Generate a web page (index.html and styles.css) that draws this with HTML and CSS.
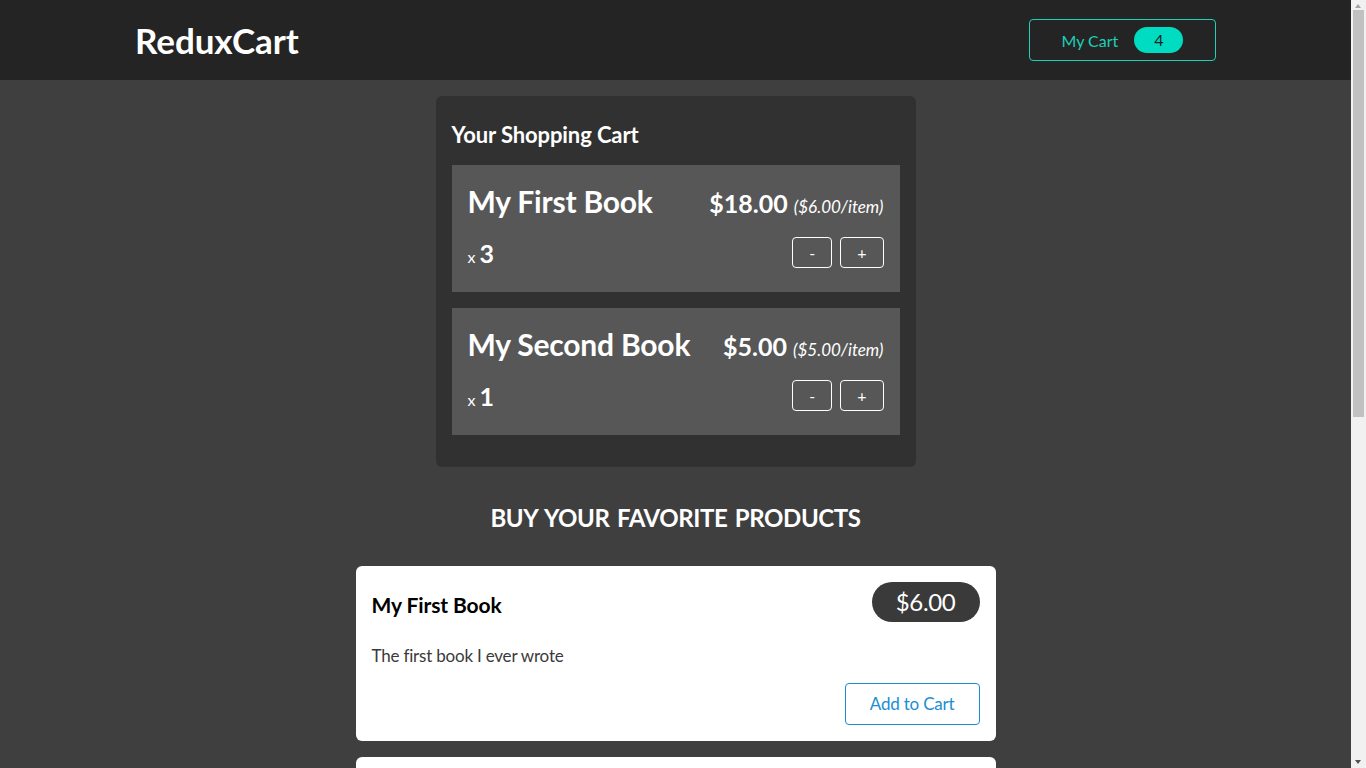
FILE: index.html
```html
<!DOCTYPE html>
<html lang="en">
<head>
<meta charset="utf-8">
<title>ReduxCart</title>
<link rel="stylesheet" href="styles.css">
</head>
<body>
<header class="header">
  <h1 class="logo">ReduxCart</h1>
  <nav>
    <button class="cart-button"><span>My Cart</span><span class="badge">4</span></button>
  </nav>
</header>
<main class="main">
  <section class="card cart">
    <h2 class="cart-title">Your Shopping Cart</h2>
    <ul class="cart-list">
      <li class="cart-item">
        <div class="cart-item-head">
          <h3 class="cart-item-title">My First Book</h3>
          <div class="cart-price">$18.00 <span class="item-price">($6.00/item)</span></div>
        </div>
        <div class="details">
          <div class="quantity">x <span class="qty-num">3</span></div>
          <div class="qty-actions">
            <button class="qty-btn">-</button>
            <button class="qty-btn">+</button>
          </div>
        </div>
      </li>
      <li class="cart-item">
        <div class="cart-item-head">
          <h3 class="cart-item-title">My Second Book</h3>
          <div class="cart-price">$5.00 <span class="item-price">($5.00/item)</span></div>
        </div>
        <div class="details">
          <div class="quantity">x <span class="qty-num">1</span></div>
          <div class="qty-actions">
            <button class="qty-btn">-</button>
            <button class="qty-btn">+</button>
          </div>
        </div>
      </li>
    </ul>
  </section>
  <section class="products">
    <h2 class="products-title">Buy your favorite products</h2>
    <ul class="product-list">
      <li class="card product">
        <div class="product-head">
          <h3 class="product-title">My First Book</h3>
          <div class="product-price">$6.00</div>
        </div>
        <p class="product-desc">The first book I ever wrote</p>
        <div class="product-actions"><button class="add-btn">Add to Cart</button></div>
      </li>
      <li class="card product">
        <div class="product-head">
          <h3 class="product-title">My Second Book</h3>
          <div class="product-price">$5.00</div>
        </div>
        <p class="product-desc">The second book I wrote</p>
        <div class="product-actions"><button class="add-btn">Add to Cart</button></div>
      </li>
    </ul>
  </section>
</main>
<div class="scrollbar" aria-hidden="true">
  <span class="sb-arrow sb-up"></span>
  <span class="sb-thumb"></span>
  <span class="sb-arrow sb-down"></span>
</div>
</body>
</html>
```
FILE: styles.css
```css
* { box-sizing: border-box; }
html { font-family: Lato, "Open Sans", sans-serif; }
body { margin: 0 15px 0 0; background: #3f3f3f; }

.header {
  height: 80px;
  padding: 0 10%;
  background: #252424;
  display: flex;
  justify-content: space-between;
  align-items: center;
}
.logo { margin: 0; color: #fff; font-size: 35px; font-weight: 700; letter-spacing: -0.1px; }
.cart-button {
  font: inherit;
  font-size: 16px;
  background: transparent;
  border: 1px solid #1ad1b9;
  border-radius: 4px;
  color: #1ad1b9;
  width: 187px;
  height: 42px;
  padding: 0 24px;
  display: flex;
  justify-content: center;
  align-items: center;
}
.badge {
  background: #00dcc1;
  color: #1d1d1d;
  border-radius: 30px;
  width: 49px;
  height: 26px;
  line-height: 26px;
  font-size: 16px;
  text-align: center;
  margin-left: 16px;
}

.card { border-radius: 6px; padding: 16px; margin: 16px auto; }
.cart { max-width: 480px; background: #313131; color: #fff; }
.cart-title { margin: 8px 0; font-size: 22px; line-height: 29px; letter-spacing: -0.1px; }
.cart-list { list-style: none; margin: 0; padding: 0; }
.cart-item { margin: 16px 0; background: #575757; padding: 16px; }
.cart-item-head { display: flex; justify-content: space-between; align-items: baseline; }
.cart-item-title { margin: 0 0 8px; font-size: 30px; line-height: 40px; letter-spacing: -0.2px; }
.cart-price { font-size: 25px; font-weight: 700; }
.item-price { font-weight: 400; font-size: 17px; font-style: italic; }
.details { display: flex; justify-content: space-between; align-items: center; }
.quantity { font-size: 16px; }
.qty-num { font-size: 25px; font-weight: 700; }
.qty-actions { display: flex; justify-content: flex-end; margin: 8px 0; gap: 8px; }
.qty-btn {
  font: inherit;
  font-size: 16px;
  line-height: 25px;
  background: transparent;
  border: 1px solid #fff;
  border-radius: 4px;
  color: #fff;
  padding: 2px 16px;
}

.products-title {
  margin: 33px auto 31px;
  text-align: center;
  text-transform: uppercase;
  color: #fff;
  font-size: 24px;
  line-height: 35px;
  letter-spacing: -0.4px;
  word-spacing: 2px;
}
.product-list { list-style: none; margin: 0; padding: 0; }
.product { max-width: 640px; background: #fff; }
.product-head { display: flex; justify-content: space-between; align-items: center; }
.product-title { margin: 11px 0 5px; font-size: 21px; line-height: 24px; color: #000; letter-spacing: -0.1px; }
.product-price {
  border-radius: 30px;
  padding: 2px 24px;
  background: #3a3a3a;
  color: #fff;
  font-size: 24px;
  line-height: 36px;
  letter-spacing: -0.3px;
}
.product-desc { color: #3a3a3a; font-size: 17px; line-height: 23px; margin: 22px 0 16px; letter-spacing: -0.2px; }
.product-actions { display: flex; justify-content: flex-end; }
.add-btn {
  font: inherit;
  font-size: 17px;
  line-height: 24px;
  background: transparent;
  border: 1px solid #1a8ed1;
  border-radius: 4px;
  color: #1a8ed1;
  padding: 8px 24px;
  letter-spacing: -0.2px;
}

.scrollbar {
  position: fixed;
  top: 0;
  right: 0;
  width: 15px;
  height: 100vh;
  background: #f1f1f1;
}
.sb-thumb {
  position: absolute;
  left: 2px;
  right: 2px;
  top: 10px;
  height: 407px;
  background: #c1c1c1;
}
.sb-arrow {
  position: absolute;
  left: 4px;
  width: 0;
  height: 0;
  border-left: 3.5px solid transparent;
  border-right: 3.5px solid transparent;
}
.sb-up { top: 4px; border-bottom: 4px solid #a3a3a3; }
.sb-down { bottom: 4px; border-top: 4px solid #505050; }
```
